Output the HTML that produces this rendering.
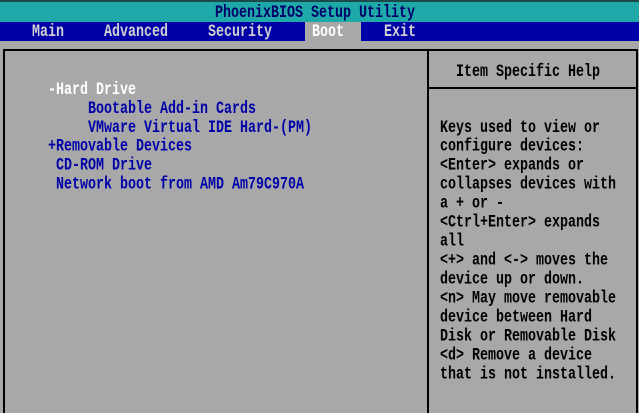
<!DOCTYPE html>
<html><head><meta charset="utf-8"><style>
html,body{margin:0;padding:0}
body{width:639px;height:413px;position:relative;overflow:hidden;background:#a8a8a8;font-family:"Liberation Mono",monospace;font-weight:bold;font-size:13.33px}
.t{position:absolute;height:19px;line-height:19px;white-space:pre;transform:scaleY(1.3);transform-origin:50% 50%}
.b{position:absolute;background:#000}
</style></head><body>
<div style="position:absolute;left:0;top:0;width:639px;height:22px;background:#1fa8a8"></div>
<div style="position:absolute;left:0;top:0;width:639px;height:2px;background:#1a4a4a"></div>
<div style="position:absolute;left:0;top:22px;width:639px;height:19px;background:#0000a8"></div>
<div style="position:absolute;left:305px;top:22px;width:56px;height:19px;background:#a8a8a8"></div>
<div class="t" style="left:215px;top:4px;color:#00006a">PhoenixBIOS Setup Utility</div>
<div class="t" style="left:32px;top:23px;color:#d0d0d0">Main</div>
<div class="t" style="left:104px;top:23px;color:#d0d0d0">Advanced</div>
<div class="t" style="left:208px;top:23px;color:#d0d0d0">Security</div>
<div class="t" style="left:312px;top:23px;color:#fff">Boot</div>
<div class="t" style="left:384px;top:23px;color:#d0d0d0">Exit</div>

<div class="b" style="left:3px;top:49px;width:635px;height:2px"></div>
<div class="b" style="left:3px;top:49px;width:2px;height:364px"></div>
<div class="b" style="left:636px;top:49px;width:2px;height:364px"></div>
<div class="b" style="left:427px;top:49px;width:2px;height:364px"></div>
<div class="b" style="left:427px;top:87px;width:211px;height:2px"></div>

<div class="t" style="left:456px;top:63px;color:#000">Item Specific Help</div>

<div class="t" style="left:48px;top:81px;color:#fff">-Hard Drive</div>
<div class="t" style="left:88px;top:100px;color:#0000a8">Bootable Add-in Cards</div>
<div class="t" style="left:88px;top:119px;color:#0000a8">VMware Virtual IDE Hard-(PM)</div>
<div class="t" style="left:48px;top:138px;color:#0000a8">+Removable Devices</div>
<div class="t" style="left:56px;top:157px;color:#0000a8">CD-ROM Drive</div>
<div class="t" style="left:56px;top:176px;color:#0000a8">Network boot from AMD Am79C970A</div>

<div class="t" style="left:440px;top:119px;color:#000">Keys used to view or</div>
<div class="t" style="left:440px;top:138px;color:#000">configure devices:</div>
<div class="t" style="left:440px;top:157px;color:#000">&lt;Enter&gt; expands or</div>
<div class="t" style="left:440px;top:176px;color:#000">collapses devices with</div>
<div class="t" style="left:440px;top:195px;color:#000">a + or -</div>
<div class="t" style="left:440px;top:214px;color:#000">&lt;Ctrl+Enter&gt; expands</div>
<div class="t" style="left:440px;top:233px;color:#000">all</div>
<div class="t" style="left:440px;top:252px;color:#000">&lt;+&gt; and &lt;-&gt; moves the</div>
<div class="t" style="left:440px;top:271px;color:#000">device up or down.</div>
<div class="t" style="left:440px;top:290px;color:#000">&lt;n&gt; May move removable</div>
<div class="t" style="left:440px;top:309px;color:#000">device between Hard</div>
<div class="t" style="left:440px;top:328px;color:#000">Disk or Removable Disk</div>
<div class="t" style="left:440px;top:347px;color:#000">&lt;d&gt; Remove a device</div>
<div class="t" style="left:440px;top:366px;color:#000">that is not installed.</div>
</body></html>
